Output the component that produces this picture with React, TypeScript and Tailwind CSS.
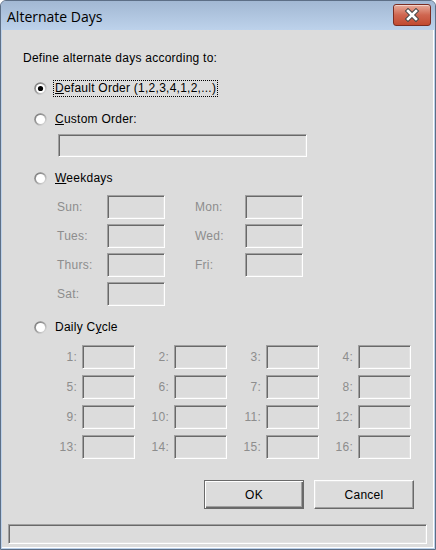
import React from 'react'

const sunken =
  'border border-t-[#a0a0a0] border-l-[#a0a0a0] border-b-white border-r-white shadow-[inset_1px_1px_0_#696969,inset_-1px_-1px_0_#e3e3e3]'

const Radio = ({ checked = false }: { checked?: boolean }) => (
  <svg width="13" height="13" viewBox="0 0 13 13" className="shrink-0">
    <defs>
      <linearGradient id="rg" x1="0" y1="0" x2="1" y2="1">
        <stop offset="0" stopColor="#6f6f6f" />
        <stop offset="0.55" stopColor="#a9a9a9" />
        <stop offset="1" stopColor="#f4f4f4" />
      </linearGradient>
    </defs>
    <circle cx="6.5" cy="6.5" r="6.3" fill="url(#rg)" />
    <circle cx="6.5" cy="6.5" r="4.6" fill="#ffffff" />
    {checked && <circle cx="6.5" cy="6.5" r="2.6" fill="#000000" />}
  </svg>
)

const Box = ({ w, h }: { w: string; h: string }) => <div className={`${w} ${h} bg-[#dcdcdc] ${sunken}`} />

const weekdays: [string, string][] = [
  ['Sun:', 'Mon:'],
  ['Tues:', 'Wed:'],
  ['Thurs:', 'Fri:'],
  ['Sat:', ''],
]

const cycleRows = [
  [1, 2, 3, 4],
  [5, 6, 7, 8],
  [9, 10, 11, 12],
  [13, 14, 15, 16],
]

export default function App() {
  return (
    <div
      className="w-[436px] h-[550px] flex flex-col border border-[#5d6f86] rounded-t-[6px] bg-[#bcd1ea] text-[12px] tracking-[0.25px] text-black overflow-hidden"
      style={{ fontFamily: '"Liberation Sans", Arial, sans-serif' }}
    >
      {/* title bar */}
      <div className="h-[29px] shrink-0 flex justify-between bg-gradient-to-b from-[#a2b8d3] to-[#bdd2eb] rounded-t-[5px] pl-[6px] pr-[4px]">
        <span
          className="self-center pt-[1px] text-[14px] tracking-normal text-black"
          style={{ fontFamily: '"Open Sans", "Noto Sans", sans-serif' }}
        >
          Alternate Days
        </span>
        <div className="mt-[3px] w-[38px] h-[22px] rounded-[3px] border border-[#7a2d22] bg-gradient-to-b from-[#e6ab9b] via-[#cf6650] to-[#c24a30] shadow-[inset_0_1px_0_rgba(255,255,255,0.5)] flex items-center justify-center">
          <svg width="16" height="14" viewBox="0 0 16 14">
            <path d="M4 3 L12 11 M12 3 L4 11" stroke="#4a4a4a" strokeWidth="4.6" strokeLinecap="square" />
            <path d="M4 3 L12 11 M12 3 L4 11" stroke="#ffffff" strokeWidth="2.6" strokeLinecap="square" />
          </svg>
        </div>
      </div>

      {/* client */}
      <div className="flex-1 mx-[1px] mb-[1px] bg-[#dcdcdc] border-r border-b border-white flex flex-col">
        <div className="mt-[21px] ml-[21px] h-[14px] leading-[14px]">Define alternate days according to:</div>

        <div className="mt-[14px] ml-[32px] h-[18px] flex items-center gap-[6px]">
          <Radio checked />
          <span className="h-[17px] leading-[15px] border border-dotted border-black px-[1px]">
            <u className="underline-offset-[1px]">D</u>efault Order (1,2,3,4,1,2,...)
          </span>
        </div>

        <div className="mt-[13px] ml-[32px] h-[18px] flex items-center gap-[8px]">
          <Radio />
          <span>
            <u className="underline-offset-[1px]">C</u>ustom Order:
          </span>
        </div>

        <div className="mt-[6px] ml-[56px]">
          <Box w="w-[249px]" h="h-[23px]" />
        </div>

        <div className="mt-[12px] ml-[32px] h-[18px] flex items-center gap-[8px]">
          <Radio />
          <span>
            <u className="underline-offset-[1px]">W</u>eekdays
          </span>
        </div>

        <div className="mt-[7px] ml-[55px] flex flex-col gap-[5px] text-[#8d8d8d]">
          {weekdays.map(([a, b]) => (
            <div key={a} className="h-[24px] flex items-center pt-[1px]">
              <span className="w-[50px]">{a}</span>
              <Box w="w-[58px]" h="h-[24px]" />
              {b && (
                <>
                  <span className="ml-[30px] w-[50px]">{b}</span>
                  <Box w="w-[58px]" h="h-[24px]" />
                </>
              )}
            </div>
          ))}
        </div>

        <div className="mt-[13px] ml-[32px] h-[18px] flex items-center gap-[8px]">
          <Radio />
          <span>
            Daily C<u className="underline-offset-[1px]">y</u>cle
          </span>
        </div>

        <div className="mt-[9px] ml-[56px] flex flex-col gap-[6px] text-[#8d8d8d]">
          {cycleRows.map((row) => (
            <div key={row[0]} className="h-[24px] flex items-center gap-[15px]">
              {row.map((n) => (
                <div key={n} className="flex items-center">
                  <span className="w-[24px] pr-[5px] text-right">{n}:</span>
                  <Box w="w-[53px]" h="h-[24px]" />
                </div>
              ))}
            </div>
          ))}
        </div>

        <div className="mt-[21px] flex justify-end gap-[10px] pr-[19px]">
          <button className="w-[100px] h-[29px] bg-[#dcdcdc] border border-[#6a6a6a] shadow-[inset_1px_1px_0_#ffffff,inset_-1px_-1px_0_#696969,inset_-2px_-2px_0_#a0a0a0]">
            OK
          </button>
          <button className="w-[100px] h-[29px] bg-[#dcdcdc] border border-t-white border-l-white border-b-[#696969] border-r-[#696969] shadow-[inset_-1px_-1px_0_#a0a0a0,inset_1px_1px_0_#e3e3e3]">
            Cancel
          </button>
        </div>

        <div className={`mt-[15px] ml-[6px] w-[419px] h-[20px] ${sunken}`} />
      </div>
    </div>
  )
}
